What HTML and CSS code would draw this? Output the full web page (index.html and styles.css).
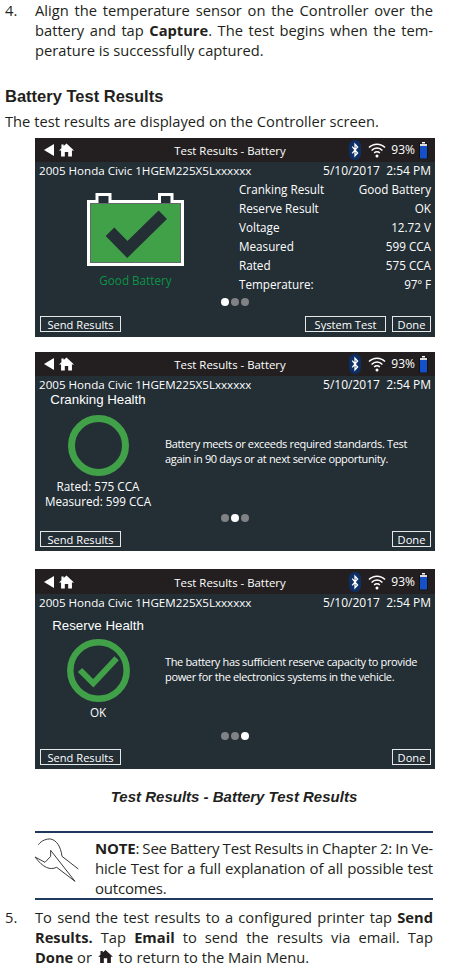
FILE: index.html
```html
<!DOCTYPE html>
<html lang="en">
<head>
    <meta charset="UTF-8">
    <meta name="viewport" content="width=device-width, initial-scale=1.0">
    <title>Battery Test Results</title>
    <link rel="stylesheet" href="styles.css">
</head>
<body>

    <svg class="defs" width="0" height="0">
        <symbol id="home" viewBox="0 0 16 14">
            <path d="M8 0 L16 7.4 H13.8 V14 H9.8 V9 H6.2 V14 H2.2 V7.4 H0 L2.6 5 V1 H5 V2.8 Z" fill="currentColor"/>
        </symbol>
        <symbol id="status" viewBox="0 0 38 20">
            <rect x="0" y="0" width="12" height="20" rx="6" fill="#0d2f66"/>
            <path d="M3.2 6.6 L8.6 13 L6 15.8 V4.2 L8.6 7 L3.2 13.4" fill="none" stroke="#fff" stroke-width="1.3"/>
            <path d="M20 7.6 A11 11 0 0 1 36 7.6 M22.6 10.4 A7.4 7.4 0 0 1 33.4 10.4 M25.2 13 A3.8 3.8 0 0 1 30.8 13" fill="none" stroke="#fff" stroke-width="1.5"/>
            <circle cx="28" cy="16" r="1.5" fill="#fff"/>
        </symbol>
        <symbol id="cell" viewBox="0 0 9 17">
            <rect x="3" y="0" width="3" height="2" fill="#fff"/>
            <rect x="0.5" y="2" width="8" height="15" fill="#1450c8" stroke="#111" stroke-width="1"/>
            <rect x="1" y="2" width="7" height="2" fill="#ddd"/>
        </symbol>
    </svg>

    <div class="step">
        <span class="num">4.</span>
        <p class="step-text">
            <span class="jl">Align the temperature sensor on the Controller over the</span>
            <span class="jl">battery and tap <b>Capture</b>. The test begins when the tem-</span>
            <span class="ll">perature is successfully captured.</span>
        </p>
    </div>

    <h2 class="section-title">Battery Test Results</h2>
    <p class="intro">The test results are displayed on the Controller screen.</p>

    <!-- screen 1 -->
    <div class="screen screen-one">
        <div class="bar">
            <div class="bar-left">
                <span class="back"></span>
                <svg class="home"><use href="#home"/></svg>
            </div>
            <div class="bar-title">Test Results - Battery</div>
            <div class="bar-right">
                <svg class="status"><use href="#status"/></svg>
                <span class="pct">93%</span>
                <svg class="cell"><use href="#cell"/></svg>
            </div>
        </div>
        <div class="info">
            <span class="vehicle">2005 Honda Civic 1HGEM225X5Lxxxxxx</span>
            <span>5/10/2017&nbsp; 2:54 PM</span>
        </div>
        <div class="main main-one">
            <div class="batt-col">
                <svg class="batt" viewBox="0 0 97 73">
                    <path d="M1.5 8.5 H10 V1.5 H23 V8.5 H72.5 V1.5 H85 V8.5 H95.5 V71.5 H1.5 Z" fill="#232e35" stroke="#fff" stroke-width="3"/>
                    <rect x="3.5" y="10.5" width="90" height="59" fill="#41a148" stroke="#5f6b66" stroke-width="1"/>
                    <rect x="12" y="3.5" width="9" height="6.5" fill="#232e35"/>
                    <rect x="75" y="3.5" width="8" height="6.5" fill="#232e35"/>
                    <path d="M23 38.7 L40.3 56.5 L75.8 21.7" fill="none" stroke="#232e35" stroke-width="12"/>
                </svg>
                <div class="batt-label">Good Battery</div>
            </div>
            <div class="results">
                <div class="row"><span>Cranking Result</span><span>Good Battery</span></div>
                <div class="row"><span>Reserve Result</span><span>OK</span></div>
                <div class="row"><span>Voltage</span><span>12.72 V</span></div>
                <div class="row"><span>Measured</span><span>599 CCA</span></div>
                <div class="row"><span>Rated</span><span>575 CCA</span></div>
                <div class="row"><span>Temperature:</span><span>97º F</span></div>
            </div>
        </div>
        <div class="dots"><i class="on"></i><i></i><i></i></div>
        <div class="actions">
            <span class="btn btn-send">Send Results</span>
            <span class="btn btn-system">System Test</span>
            <span class="btn btn-done">Done</span>
        </div>
    </div>

    <!-- screen 2 -->
    <div class="screen screen-two">
        <div class="bar">
            <div class="bar-left">
                <span class="back"></span>
                <svg class="home"><use href="#home"/></svg>
            </div>
            <div class="bar-title">Test Results - Battery</div>
            <div class="bar-right">
                <svg class="status"><use href="#status"/></svg>
                <span class="pct">93%</span>
                <svg class="cell"><use href="#cell"/></svg>
            </div>
        </div>
        <div class="info">
            <span class="vehicle">2005 Honda Civic 1HGEM225X5Lxxxxxx</span>
            <span>5/10/2017&nbsp; 2:54 PM</span>
        </div>
        <div class="main main-health">
            <div class="health">
                <div class="health-title">Cranking Health</div>
                <svg class="ring" viewBox="0 0 61 61">
                    <circle cx="30.5" cy="30.5" r="27" fill="none" stroke="#41a148" stroke-width="7"/>
                </svg>
                <div class="health-val">Rated: 575 CCA</div>
                <div class="health-val">Measured: 599 CCA</div>
            </div>
            <p class="health-text">Battery meets or exceeds required standards. Test<br>again in 90 days or at next service opportunity.</p>
        </div>
        <div class="dots"><i></i><i class="on"></i><i></i></div>
        <div class="actions">
            <span class="btn btn-send">Send Results</span>
            <span class="btn btn-done">Done</span>
        </div>
    </div>

    <!-- screen 3 -->
    <div class="screen screen-three">
        <div class="bar">
            <div class="bar-left">
                <span class="back"></span>
                <svg class="home"><use href="#home"/></svg>
            </div>
            <div class="bar-title">Test Results - Battery</div>
            <div class="bar-right">
                <svg class="status"><use href="#status"/></svg>
                <span class="pct">93%</span>
                <svg class="cell"><use href="#cell"/></svg>
            </div>
        </div>
        <div class="info">
            <span class="vehicle">2005 Honda Civic 1HGEM225X5Lxxxxxx</span>
            <span>5/10/2017&nbsp; 2:54 PM</span>
        </div>
        <div class="main main-health">
            <div class="health">
                <div class="health-title">Reserve Health</div>
                <svg class="ring ring-ok" viewBox="0 0 63 63">
                    <circle cx="31.5" cy="31.5" r="28.2" fill="none" stroke="#41a148" stroke-width="6.5"/>
                    <path d="M13 31 L26.3 44.3 L49.7 19.3" fill="none" stroke="#41a148" stroke-width="6"/>
                </svg>
                <div class="health-val">OK</div>
            </div>
            <p class="health-text">The battery has sufficient reserve capacity to provide<br>power for the electronics systems in the vehicle.</p>
        </div>
        <div class="dots"><i></i><i></i><i class="on"></i></div>
        <div class="actions">
            <span class="btn btn-send">Send Results</span>
            <span class="btn btn-done">Done</span>
        </div>
    </div>

    <p class="caption">Test Results - Battery Test Results</p>

    <div class="note">
        <svg class="wrench" viewBox="0 0 165 165">
            <path d="M25 35 C35 22 50 17 62 18 C80 22 92 40 96 70 L145 108 M135 145 L80 103 C60 112 40 105 15 72 L45 88 L62 70 L62 52 Z" fill="none" stroke="#3a3a3a" stroke-width="3"/>
        </svg>
        <p class="note-text">
            <span class="jl"><b>NOTE</b>: See Battery Test Results in Chapter 2: In Ve-</span>
            <span class="jl">hicle Test for a full explanation of all possible test</span>
            <span class="ll">outcomes.</span>
        </p>
    </div>

    <div class="step step-five">
        <span class="num">5.</span>
        <p class="step-text">
            <span class="jl">To send the test results to a configured printer tap <b>Send</b></span>
            <span class="jl"><b>Results.</b> Tap <b>Email</b> to send the results via email. Tap</span>
            <span class="ll"><b>Done</b> or <svg class="home-inline"><use href="#home"/></svg> to return to the Main Menu.</span>
        </p>
    </div>

</body>
</html>
```

FILE: styles.css
```css
body {
    margin: 0;
    box-sizing: border-box;
    width: 468px;
    height: 978px;
    overflow: hidden;
    background-color: #fff;
    color: #231f20;
    font-family: "Open Sans", Arial, sans-serif;
    font-size: 14.7px;
    line-height: 20px;
}

.defs {
    position: absolute;
}

p {
    margin: 0;
}

.jl,
.ll {
    display: block;
    white-space: nowrap;
}

.jl {
    text-align: justify;
    text-align-last: justify;
    white-space: normal;
}

.step {
    display: flex;
    padding: 0 35px 0 5px;
}

.num {
    width: 30px;
    flex: none;
}

.step-text {
    flex: 1;
}

.section-title {
    margin: 25px 0 0 5px;
    font-family: "Liberation Sans", Arial, sans-serif;
    font-size: 16.5px;
    line-height: 22px;
}

.intro {
    margin: 4px 0 0 5px;
}

/* controller screens */
.screen {
    width: 400px;
    height: 199px;
    margin-left: 35px;
    display: flex;
    flex-direction: column;
    background-color: #232e35;
    color: #fff;
    font-size: 12px;
    line-height: 16px;
}

.screen-one {
    margin-top: 7px;
}

.screen-two {
    margin-top: 15px;
}

.screen-three {
    margin-top: 18px;
    height: 200px;
}

.bar {
    height: 24px;
    flex: none;
    display: grid;
    grid-template-columns: 1fr auto 1fr;
    align-items: center;
    background-color: #231f20;
    padding: 0 7px 0 9px;
}

.screen-three .bar {
    height: 25px;
}

.bar-left {
    display: flex;
    align-items: center;
    gap: 5px;
}

.back {
    width: 0;
    height: 0;
    border-top: 6px solid transparent;
    border-bottom: 6px solid transparent;
    border-right: 10px solid #fff;
}

.home {
    width: 15px;
    height: 14px;
    color: #fff;
}

.bar-title {
    font-size: 11.4px;
    padding: 2px 12px 0 0;
}

.bar-right {
    display: flex;
    align-items: center;
    justify-content: flex-end;
    gap: 4px;
}

.status {
    width: 38px;
    height: 20px;
}

.cell {
    width: 9px;
    height: 17px;
}

.info {
    height: 16px;
    flex: none;
    box-sizing: border-box;
    padding: 1px 4px 0;
    display: flex;
    justify-content: space-between;
}

.vehicle {
    font-size: 11.6px;
}

.main {
    flex: 1;
    display: flex;
}

.main-one {
    padding-left: 52px;
}

.batt-col {
    width: 97px;
    padding-top: 15px;
}

.batt {
    display: block;
    width: 97px;
    height: 73px;
}

.batt-label {
    margin-top: 6px;
    font-size: 11.7px;
    text-align: center;
    white-space: nowrap;
    color: #0b9444;
}

.results {
    width: 192px;
    margin-left: 55px;
    padding-top: 2px;
    font-size: 11.7px;
}

.row {
    display: flex;
    justify-content: space-between;
    height: 19px;
    line-height: 19px;
}

.main-health {
    gap: 4px;
}

.health {
    width: 126px;
    flex: none;
    display: flex;
    flex-direction: column;
    align-items: center;
}

.health-title {
    font-family: "Liberation Sans", Arial, sans-serif;
    font-size: 13.3px;
    white-space: nowrap;
}

.ring {
    width: 61px;
    height: 61px;
    margin: 7px 0 3px;
}

.ring-ok {
    width: 63px;
    height: 63px;
    margin-top: 5px;
}

.health-val {
    font-size: 11.7px;
    line-height: 15px;
    white-space: nowrap;
}

.health-text {
    font-size: 11px;
    letter-spacing: -0.34px;
    line-height: 15px;
    padding-top: 44px;
    white-space: nowrap;
}

.screen-three .health-title {
    margin-top: 8px;
}

.dots {
    height: 12px;
    flex: none;
    display: flex;
    justify-content: center;
    align-items: center;
    gap: 2px;
    margin-bottom: 3px;
}

.screen-one .dots {
    margin-bottom: 5px;
}

.dots i {
    width: 8px;
    height: 8px;
    border-radius: 50%;
    background-color: #808285;
}

.dots i.on {
    background-color: #fff;
}

.actions {
    height: 24px;
    flex: none;
    display: flex;
    gap: 6px;
    padding: 4px 4px 0 5px;
    box-sizing: border-box;
}

.screen-one .actions {
    padding-top: 3px;
}

.btn {
    height: 16px;
    box-sizing: border-box;
    border: 1px solid #e6e7e8;
    font-size: 11.1px;
    line-height: 15px;
    text-align: center;
}

.btn-send {
    width: 81px;
}

.btn-system {
    width: 81px;
    margin-left: auto;
}

.btn-done {
    width: 39px;
}

.screen-two .btn-done,
.screen-three .btn-done {
    margin-left: auto;
}

.caption {
    margin-top: 18px;
    text-align: center;
    font-family: "Liberation Sans", Arial, sans-serif;
    font-size: 15px;
    font-weight: bold;
    font-style: italic;
}

.note {
    margin: 24px 35px 0;
    height: 69px;
    box-sizing: border-box;
    border-top: 2px solid #1f3a5f;
    border-bottom: 2px solid #1f3a5f;
    display: flex;
}

.wrench {
    width: 55px;
    height: 55px;
    margin-left: -5px;
    flex: none;
}

.note-text {
    margin-left: 10px;
    flex: 1;
    padding-top: 5px;
    font-size: 15px;
    letter-spacing: -0.2px;
    word-spacing: -1.5px;
}

.step-five {
    margin-top: 7px;
}

.home-inline {
    width: 15px;
    height: 13px;
    margin: 0 2px;
    color: #231f20;
}
```
